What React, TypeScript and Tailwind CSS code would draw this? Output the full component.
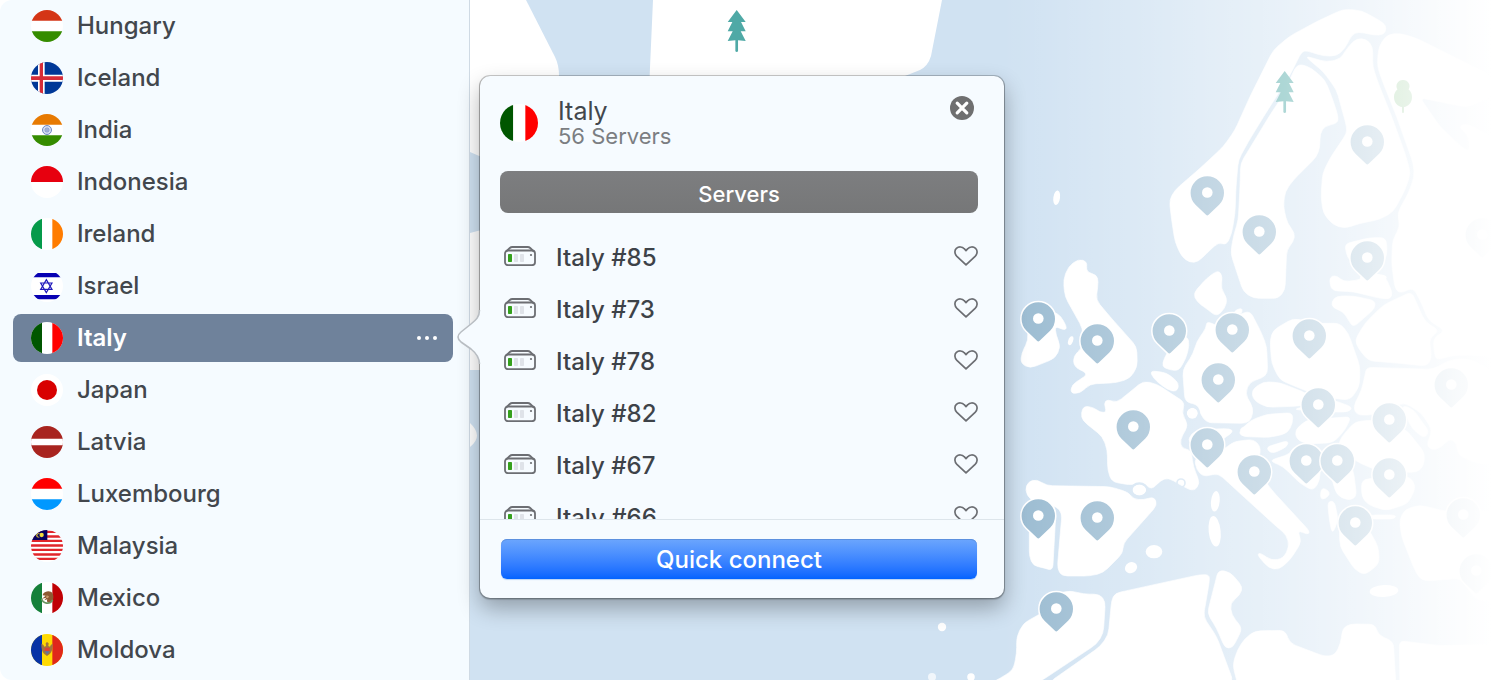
import { useState } from 'react';
import type { ReactNode } from 'react';

type Point = [number, number];

/* ---------- Flags ---------- */

const flags: Record<string, ReactNode> = {
  Hungary: (
    <>
      <path fill="#fff" d="M0 0h96v96H0z" />
      <path fill="#d43516" d="M0 0h96v32H0z" />
      <path fill="#358c00" d="M0 64h96v32H0z" />
    </>
  ),
  Iceland: (
    <>
      <path fill="#003897" d="M0 0h96v96H0z" />
      <path fill="#fff" d="M21 0h20v96H21zM0 38h96v21H0z" />
      <path fill="#d62c38" d="M26 0h10v96H26zM0 43h96v11H0z" />
    </>
  ),
  India: (
    <>
      <path fill="#fff" d="M0 0h96v96H0z" />
      <path fill="#e77a02" d="M0 0h96v32H0z" />
      <path fill="#358c00" d="M0 64h96v32H0z" />
      <circle cx="48" cy="48" r="13.500" fill="#d4dcf0" stroke="#6f87c4" strokeWidth="3" />
      <circle cx="48" cy="48" r="6" fill="none" stroke="#7e93cb" strokeWidth="3" />
      <circle cx="48" cy="48" r="2" fill="#4560ac" />
    </>
  ),
  Indonesia: (
    <>
      <path fill="#fff" d="M0 0h96v96H0z" />
      <path fill="#e7000f" d="M0 0h96v48H0z" />
    </>
  ),
  Ireland: (
    <>
      <path fill="#fff" d="M0 0h96v96H0z" />
      <path fill="#059a4a" d="M0 0h33v96H0z" />
      <path fill="#ff7c00" d="M64 0h32v96H64z" />
    </>
  ),
  Israel: (
    <>
      <path fill="#fff" d="M0 0h96v96H0z" />
      <path fill="#0700b2" d="M0 9h96v13H0zM0 75h96v13H0z" />
      <path
        fill="none"
        stroke="#2019bb"
        strokeWidth="3.500"
        d="M46 29 63 58H29zM46 68 29 39h34z"
      />
    </>
  ),
  Italy: (
    <>
      <path fill="#fff" d="M0 0h96v96H0z" />
      <path fill="#005600" d="M0 0h33v96H0z" />
      <path fill="#ff0000" d="M64 0h32v96H64z" />
    </>
  ),
  Japan: (
    <>
      <path fill="#fff" d="M0 0h96v96H0z" />
      <circle cx="48" cy="48" r="30" fill="#d80000" />
    </>
  ),
  Latvia: (
    <>
      <path fill="#a8241f" d="M0 0h96v96H0z" />
      <path fill="#fff" d="M0 38h96v20H0z" />
    </>
  ),
  Luxembourg: (
    <>
      <path fill="#fff" d="M0 0h96v96H0z" />
      <path fill="#ff0000" d="M0 0h96v32H0z" />
      <path fill="#0098ff" d="M0 64h96v32H0z" />
    </>
  ),
  Malaysia: (
    <>
      <path fill="#fff" d="M0 0h96v96H0z" />
      <path
        fill="#e1252b"
        d="M0 2h96v7H0zM0 16h96v7H0zM0 29h96v7H0zM0 43h96v7H0zM0 56h96v7H0zM0 70h96v7H0zM0 83h96v7H0z"
      />
      <path fill="#06005f" d="M0 0h49v30H0z" />
      <circle cx="22" cy="16" r="7" fill="#b9a437" />
      <circle cx="25" cy="16" r="5" fill="#06005f" />
      <circle cx="32" cy="15" r="6.500" fill="#f2dc3c" />
    </>
  ),
  Mexico: (
    <>
      <path fill="#fff" d="M0 0h96v96H0z" />
      <path fill="#15803a" d="M0 0h33v96H0z" />
      <path fill="#c00005" d="M64 0h32v96H64z" />
      <path
        fill="#8f5a33"
        d="M36 36c7-10 24-11 29-1 4 8 3 21-7 26-9 4-12-3-9-9l-9 3 6-8-13 3 11-9-9-1z"
      />
      <path fill="#c99a6c" d="m47 40 7 3-3 6-6-2z" />
      <path fill="none" stroke="#69945f" strokeWidth="5" d="M32 50c3 15 24 19 33 4" />
    </>
  ),
  Moldova: (
    <>
      <path fill="#ffda02" d="M0 0h96v96H0z" />
      <path fill="#0733a6" d="M0 0h33v96H0z" />
      <path fill="#e0271b" d="M64 0h32v96H64z" />
      <path
        fill="#a3763f"
        d="M31 29c5 1 8 5 9 9l5-2-1-8 4-4 5 4-1 8 5 2c1-5 5-8 9-9-1 14-3 24-9 30l-9 7-9-7c-6-6-8-16-8-30z"
      />
      <path fill="#dd4433" d="M41 41h15v11H41z" />
      <path fill="#5b75a8" d="M41 52h15l-7 9z" />
    </>
  ),
};

function Flag({ country, large = false }: { country: string; large?: boolean }) {
  return (
    <span
      className={
        large
          ? 'block size-[38px] shrink-0 overflow-hidden rounded-full'
          : 'block size-8 shrink-0 overflow-hidden rounded-full'
      }
    >
      <svg viewBox="0 0 96 96" className="block size-full" aria-hidden="true">
        {flags[country]}
      </svg>
    </span>
  );
}

/* ---------- Map ---------- */

/* Land outlines, in thirds of a map unit counted from (1000, 0). */
const lands: Point[][] = [
  // Norway
  [[1040, 28], [1085, 32], [1150, 68], [1160, 85], [1150, 105], [1120, 105], [1075, 95], [1055, 105], [1035, 145], [1010, 168], [970, 168], [920, 152], [905, 155], [890, 185], [870, 225], [845, 265], [800, 335], [745, 425], [715, 480], [708, 560], [705, 640], [695, 700], [680, 735], [655, 727], [620, 760], [595, 785], [570, 788], [545, 770], [525, 725], [515, 660], [508, 600], [525, 570], [600, 505], [670, 440], [705, 390], [750, 290], [820, 150], [870, 108], [950, 65], [1020, 32]],
  // Sweden
  [[905, 193], [935, 205], [975, 240], [995, 290], [1015, 350], [1012, 370], [975, 378], [960, 400], [960, 440], [950, 470], [880, 540], [855, 575], [850, 620], [862, 670], [885, 700], [880, 725], [860, 750], [855, 870], [835, 895], [760, 895], [730, 875], [715, 830], [692, 760], [700, 710], [715, 660], [720, 560], [722, 490], [740, 460], [810, 345], [850, 285], [880, 215], [890, 198]],
  // Finland
  [[915, 168], [980, 186], [1020, 178], [1045, 140], [1070, 115], [1100, 118], [1118, 140], [1118, 200], [1135, 250], [1175, 350], [1215, 460], [1232, 520], [1215, 570], [1180, 635], [1140, 658], [1080, 670], [1035, 685], [1000, 675], [970, 640], [963, 590], [968, 520], [990, 475], [1040, 400], [1040, 380], [1010, 270], [970, 215], [940, 190]],
  // Russia
  [[1145, 125], [1165, 103], [1200, 100], [1250, 115], [1470, 225], [1476, 290], [1400, 322], [1260, 293], [1320, 380], [1395, 450], [1410, 450], [1405, 405], [1375, 380], [1400, 370], [1600, 480], [1600, 1080], [1410, 1065], [1360, 1066], [1310, 1080], [1303, 1060], [1300, 1015], [1335, 992], [1285, 960], [1265, 910], [1240, 863], [1200, 880], [1185, 865], [1175, 790], [1178, 720], [1200, 680], [1192, 640], [1225, 580], [1243, 530], [1240, 490], [1190, 350], [1150, 250], [1132, 200], [1135, 150]],
  // Ukraine
  [[1100, 1102], [1200, 1105], [1300, 1108], [1345, 1082], [1390, 1075], [1430, 1085], [1476, 1115], [1600, 1150], [1600, 1400], [1430, 1390], [1375, 1365], [1370, 1330], [1350, 1315], [1320, 1345], [1295, 1350], [1280, 1335], [1297, 1290], [1265, 1240], [1215, 1208], [1160, 1225], [1120, 1245], [1070, 1245], [1060, 1220], [1085, 1170], [1095, 1125]],
  // Moldova
  [[1205, 1215], [1240, 1228], [1262, 1260], [1288, 1295], [1272, 1315], [1235, 1285]],
  // Belarus
  [[1065, 1020], [1095, 970], [1150, 915], [1235, 875], [1250, 910], [1275, 965], [1318, 992], [1288, 1015], [1295, 1075], [1280, 1098], [1200, 1090], [1105, 1082], [1075, 1045]],
  // Estonia
  [[1033, 732], [1110, 713], [1158, 713], [1162, 760], [1145, 805], [1080, 795], [1045, 780]],
  // Latvia
  [[988, 840], [995, 828], [1012, 828], [1030, 845], [1080, 840], [1095, 822], [1155, 828], [1178, 880], [1170, 897], [1140, 895], [1060, 875], [995, 872]],
  // Lithuania
  [[995, 905], [1010, 888], [1060, 888], [1125, 902], [1125, 925], [1060, 982], [1045, 960], [1030, 935], [998, 923]],
  // Poland
  [[810, 1020], [820, 990], [880, 955], [950, 970], [1020, 970], [1045, 1000], [1080, 1100], [1078, 1160], [1050, 1200], [970, 1192], [900, 1165], [840, 1140], [815, 1090]],
  // Germany
  [[618, 985], [620, 965], [640, 972], [660, 980], [700, 950], [750, 932], [785, 1000], [800, 1040], [803, 1120], [785, 1135], [750, 1145], [735, 1180], [760, 1225], [755, 1255], [740, 1270], [620, 1268], [600, 1240], [595, 1215], [555, 1205], [548, 1110], [580, 1060], [590, 1025]],
  // Denmark
  [[580, 880], [620, 835], [655, 810], [668, 830], [662, 865], [682, 895], [675, 925], [650, 950], [625, 930], [590, 905]],
  [[698, 935], [728, 922], [724, 945]],
  // Czechia
  [[755, 1170], [790, 1145], [840, 1148], [920, 1180], [950, 1205], [900, 1218], [800, 1222], [760, 1200]],
  // Slovakia
  [[880, 1228], [1000, 1200], [1058, 1222], [1045, 1236], [970, 1236]],
  // Austria
  [[715, 1298], [750, 1262], [800, 1243], [878, 1238], [878, 1270], [862, 1300], [810, 1312], [730, 1310]],
  // Hungary
  [[885, 1290], [920, 1260], [1054, 1250], [1035, 1290], [1000, 1328], [920, 1332], [890, 1318]],
  // Romania
  [[1025, 1310], [1065, 1265], [1120, 1260], [1220, 1290], [1275, 1360], [1270, 1400], [1250, 1417], [1140, 1415], [1070, 1385], [1015, 1335]],
  // Bulgaria
  [[1085, 1440], [1085, 1490], [1105, 1515], [1160, 1532], [1225, 1510], [1248, 1460], [1230, 1430], [1150, 1430]],
  // Balkans
  [[1000, 1345], [1035, 1370], [1060, 1410], [1070, 1490], [1045, 1502], [1010, 1485], [985, 1400]],
  [[797, 1342], [865, 1321], [862, 1340], [815, 1362]],
  [[808, 1382], [870, 1362], [880, 1340], [960, 1350], [960, 1440], [940, 1473], [900, 1450], [850, 1400]],
  [[960, 1495], [965, 1460], [993, 1478], [975, 1498]],
  [[983, 1505], [1003, 1503], [1015, 1560], [997, 1602], [988, 1560]],
  // Greece
  [[1018, 1580], [1090, 1560], [1135, 1640], [1138, 1690], [1095, 1725], [1065, 1710], [1020, 1640]],
  [[1110, 1545], [1188, 1545], [1184, 1557], [1110, 1557]],
  // Turkey
  [[1198, 1560], [1215, 1528], [1260, 1515], [1340, 1535], [1600, 1530], [1600, 1810], [1430, 1800], [1380, 1735], [1280, 1743], [1258, 1735], [1240, 1700], [1205, 1610]],
  // Great Britain
  [[190, 840], [205, 800], [235, 777], [262, 785], [258, 815], [290, 825], [295, 845], [288, 900], [330, 950], [410, 1040], [412, 1100], [390, 1135], [350, 1148], [270, 1152], [240, 1180], [212, 1180], [215, 1155], [265, 1122], [222, 1100], [220, 1068], [250, 1040], [248, 985], [195, 890]],
  // Ireland
  [[62, 1090], [65, 1060], [85, 1020], [80, 960], [110, 930], [160, 935], [182, 947], [202, 985], [190, 990], [165, 978], [168, 1005], [182, 1040], [165, 1075], [90, 1105]],
  // Netherlands
  [[487, 1090], [500, 1060], [535, 1010], [563, 1010], [568, 1035], [558, 1075], [535, 1114], [492, 1105]],
  // Belgium
  [[450, 1112], [500, 1118], [538, 1150], [530, 1176], [500, 1168], [460, 1135]],
  // France
  [[243, 1240], [252, 1218], [280, 1222], [300, 1237], [320, 1237], [312, 1210], [322, 1198], [350, 1208], [385, 1180], [430, 1143], [470, 1152], [555, 1208], [545, 1240], [565, 1275], [540, 1320], [545, 1345], [573, 1350], [580, 1400], [600, 1450], [582, 1474], [550, 1460], [505, 1433], [480, 1442], [455, 1470], [430, 1448], [390, 1455], [335, 1445], [323, 1410], [322, 1350], [308, 1310], [248, 1262]],
  // Switzerland
  [[563, 1325], [575, 1300], [600, 1288], [690, 1286], [700, 1295], [665, 1320], [640, 1345], [600, 1340]],
  // Liechtenstein corridor
  [[718, 1286], [745, 1276], [755, 1285], [728, 1300]],
  // Italy
  [[583, 1375], [620, 1360], [670, 1350], [700, 1325], [760, 1318], [782, 1340], [778, 1375], [765, 1400], [815, 1470], [930, 1595], [922, 1604], [892, 1590], [905, 1625], [870, 1680], [835, 1710], [805, 1703], [772, 1665], [780, 1658], [815, 1682], [850, 1675], [868, 1640], [860, 1605], [830, 1580], [720, 1480], [655, 1420], [610, 1430], [590, 1410]],
  // Spain
  [[75, 1470], [85, 1445], [110, 1438], [140, 1457], [330, 1460], [385, 1477], [400, 1497], [430, 1500], [462, 1490], [472, 1515], [370, 1630], [368, 1660], [310, 1718], [270, 1728], [185, 1728], [172, 1705], [186, 1540], [170, 1520], [90, 1500]],
  // Portugal
  [[88, 1580], [85, 1510], [155, 1510], [168, 1530], [158, 1712], [130, 1703], [100, 1697], [88, 1670]],
  // Morocco
  [[50, 1910], [70, 1870], [150, 1825], [130, 1790], [210, 1772], [250, 1782], [300, 1783], [316, 1805], [310, 1900], [290, 1932], [120, 2045], [-20, 2045], [0, 2035], [40, 2010], [50, 1960]],
  // Algeria
  [[335, 1800], [345, 1780], [380, 1772], [600, 1724], [628, 1724], [628, 1745], [610, 1850], [650, 1910], [700, 2045], [150, 2045], [300, 1940], [325, 1905]],
  // Tunisia
  [[645, 1750], [655, 1710], [690, 1716], [728, 1760], [720, 1785], [690, 1810], [695, 1845], [727, 1885], [698, 1944], [675, 1944], [650, 1885], [622, 1840]],
  // Libya
  [[698, 1995], [712, 1950], [735, 1915], [765, 1893], [855, 1891], [870, 1930], [975, 1970], [1005, 1965], [1022, 1930], [1028, 1885], [1050, 1872], [1125, 1873], [1135, 1905], [1180, 1925], [1188, 2060], [715, 2060]],
  // Egypt
  [[1198, 1922], [1320, 1937], [1600, 1930], [1600, 2060], [1200, 2060]],
];

const islands: [number, number, number, number, number][] = [
  [170, 593, 10, 22, 8],
  [212, 1022, 7, 14, 20],
  [577, 1240, 17, 17, 0],
  [418, 1470, 21, 17, 0],
  [646, 1504, 13, 31, 6],
  [644, 1594, 18, 46, -6],
  [462, 1655, 25, 20, 0],
  [393, 1703, 19, 16, -30],
  [1152, 1773, 43, 18, -3],
  [1120, 833, 40, 12, 0],
];

const pins: Point[] = [
  [1367, 142], [1207, 193], [1259, 232], [1482, 235], [1367, 258], [1038, 319],
  [1097, 341], [1169, 331], [1232, 330], [1309, 336], [1218, 380], [1451, 385],
  [1318, 405], [1389, 420], [1133, 427], [1207, 445], [1306, 461], [1337, 461],
  [1254, 472], [1389, 475], [1463, 515], [1355, 523], [1476, 571], [1038, 516],
  [1097, 518], [1056, 609],
];

function roundedPath(points: Point[], radius: number) {
  const count = points.length;
  return (
    points
      .map((p, i) => {
        const prev = points[(i + count - 1) % count];
        const next = points[(i + 1) % count];
        const toward = (q: Point): Point => {
          const length = Math.hypot(q[0] - p[0], q[1] - p[1]);
          const t = Math.min(radius, length / 2) / length;
          return [p[0] + (q[0] - p[0]) * t, p[1] + (q[1] - p[1]) * t];
        };
        const a = toward(prev);
        const b = toward(next);
        return `${i ? 'L' : 'M'}${a[0].toFixed(1)} ${a[1].toFixed(1)}Q${p[0]} ${p[1]} ${b[0].toFixed(1)} ${b[1].toFixed(1)}`;
      })
      .join('') + 'Z'
  );
}

const pinePath =
  'M0 0 27 36 13 36 27 64 12 64 27 93 4 91V124q-4 4-8 0V91L-27 93-12 64-27 64-13 36-27 36Z';

function WorldMap() {
  return (
    <svg
      viewBox="470 0 1022 680"
      preserveAspectRatio="xMinYMin slice"
      className="absolute inset-0 size-full"
      aria-hidden="true"
    >
      <defs>
        <linearGradient id="fade" gradientUnits="userSpaceOnUse" x1="1000" y1="0" x2="1492" y2="0">
          <stop offset="0" stopColor="#fff" stopOpacity="0" />
          <stop offset="0.080" stopColor="#fff" stopOpacity="0.060" />
          <stop offset="0.420" stopColor="#fff" stopOpacity="0.400" />
          <stop offset="0.580" stopColor="#fff" stopOpacity="0.540" />
          <stop offset="0.750" stopColor="#fff" stopOpacity="0.720" />
          <stop offset="0.920" stopColor="#fff" stopOpacity="0.920" />
          <stop offset="1" stopColor="#fff" />
        </linearGradient>
      </defs>
      <path fill="#d0e2f2" d="M470 0H1492V680H470z" />
      <g fill="#fff">
        <path d="M470 0H526L555 57Q559 65 559 76V120L500 165 470 152z" />
        <path d="M470 233 500 225V370H470zM470 423Q484 436 470 447z" />
        <path d="M653 0H942L931 56Q928 66 920 70L905 76 890 90H649z" />
        <circle cx="942" cy="627" r="4.200" />
        <circle cx="932" cy="677" r="4" opacity="0.700" />
        <circle cx="971" cy="677" r="3.800" />
      </g>
      <g transform="translate(1000 0) scale(0.33333)" fill="#fff">
        {lands.map((points, i) => (
          <path
            key={i}
            d={roundedPath(points, 18)}
            stroke="#fff"
            strokeWidth="2"
            strokeLinejoin="round"
          />
        ))}
        {islands.map(([cx, cy, rx, ry, turn], i) => (
          <ellipse
            key={i}
            cx={cx}
            cy={cy}
            rx={rx}
            ry={ry}
            transform={`rotate(${turn} ${cx} ${cy})`}
          />
        ))}
        <g fill="none" stroke="#d0e2f2" strokeWidth="7">
          <circle cx="577" cy="1240" r="20" />
          <ellipse cx="418" cy="1470" rx="24" ry="20" />
          <circle cx="543" cy="1449" r="12" strokeWidth="5" />
        </g>
      </g>
      <path fill="#4fa9a6" transform="translate(736.700 10) scale(0.33333)" d={pinePath} />
      <path fill="#4fa9a6" transform="translate(1284.700 71) scale(0.33333)" d={pinePath} />
      <path
        fill="#84c286"
        d="M1403 80a6.300 6.300 0 0 1 5.600 9.500c2.400 2 3.400 4.500 3.400 7.500 0 6-4 9.500-8 10v5a1 1 0 0 1-2 0v-5c-4-.5-8-4-8-10 0-3 1-5.500 3.400-7.500A6.300 6.300 0 0 1 1403 80z"
      />
      {pins.map(([x, y]) => (
        <g key={`${x}-${y}`} transform={`translate(${x + 0.3} ${y})`}>
          <path
            d="M-11.800 11.800a16.700 16.700 0 1 1 23.600 0L1.300 21.800a1.800 1.800 0 0 1-2.600 0z"
            fill="#9abbd1"
            stroke="#fff"
            strokeWidth="3"
            paintOrder="stroke"
          />
          <circle cy="-0.500" r="5.300" fill="#fff" />
        </g>
      ))}
      <path fill="url(#fade)" d="M1000 0H1492V680H1000z" />
    </svg>
  );
}

/* ---------- Icons ---------- */

function ServerIcon() {
  return (
    <svg viewBox="0 0 32 20" className="h-5 w-8 shrink-0" fill="none" aria-hidden="true">
      <rect x="1" y="4.500" width="30" height="14.700" rx="3" stroke="#6c6e73" strokeWidth="1.800" />
      <path
        d="M2 5.700 5.800 2Q6.800 1 8.300 1H23.700Q25.200 1 26.200 2L30 5.700"
        stroke="#6c6e73"
        strokeWidth="1.800"
      />
      <rect x="4" y="8" width="4" height="8" rx="0.700" fill="#35a01d" />
      <rect x="10" y="8" width="4" height="8" rx="0.700" fill="#dfe3e9" />
      <rect x="16" y="8" width="4" height="8" rx="0.700" fill="#dfe3e9" />
      <circle cx="27" cy="9" r="1.100" fill="#6c6e73" />
    </svg>
  );
}

function HeartIcon({ filled }: { filled: boolean }) {
  return (
    <svg viewBox="0 0 24 20" className="h-5 w-6" aria-hidden="true">
      <path
        d="M12 18.900 2.900 10.300C.2 7.600.4 4.300 2.400 2.400 4.700.3 8.300.6 10.200 2.700L12 4.600 13.800 2.700C15.700.6 19.300.3 21.600 2.400 23.600 4.300 23.800 7.600 21.100 10.300Z"
        fill={filled ? '#6c6e73' : 'none'}
        stroke="#6c6e73"
        strokeWidth="1.700"
        strokeLinejoin="round"
      />
    </svg>
  );
}

/* ---------- Sidebar ---------- */

const countries = [
  'Hungary', 'Iceland', 'India', 'Indonesia', 'Ireland', 'Israel', 'Italy',
  'Japan', 'Latvia', 'Luxembourg', 'Malaysia', 'Mexico', 'Moldova',
];

function Sidebar() {
  return (
    <nav
      aria-label="Countries"
      className="w-[470px] shrink-0 rounded-l-xl border-r border-[#cfdae4] bg-[#f5fbff]"
    >
      <ul className="flex flex-col gap-1 py-0.5 pr-4 pl-[13px]">
        {countries.map((country) => {
          const selected = country === 'Italy';
          return (
            <li
              key={country}
              className={
                selected
                  ? 'flex h-12 items-center rounded-lg bg-[#6f829b] text-white'
                  : 'flex h-12 items-center rounded-lg text-[#42474d]'
              }
            >
              <button
                type="button"
                className="flex h-full flex-1 items-center gap-3.5 pl-[18px] text-left text-[24px] leading-8 font-medium"
              >
                <Flag country={country} />
                {selected ? <span className="font-semibold">{country}</span> : country}
              </button>
              {selected && (
                <button type="button" aria-label="More" className="mr-4 flex gap-1 p-0">
                  <span className="size-1 rounded-full bg-white" />
                  <span className="size-1 rounded-full bg-white" />
                  <span className="size-1 rounded-full bg-white" />
                </button>
              )}
            </li>
          );
        })}
      </ul>
    </nav>
  );
}

/* ---------- Popover ---------- */

const servers = ['Italy #85', 'Italy #73', 'Italy #78', 'Italy #82', 'Italy #67', 'Italy #66'];

function CountryPopover() {
  const [liked, setLiked] = useState<string[]>([]);
  const toggle = (name: string) =>
    setLiked((all) => (all.includes(name) ? all.filter((n) => n !== name) : [...all, name]));

  return (
    <section
      aria-label="Italy"
      className="absolute top-[76px] left-2.5 w-[524px] rounded-[10px] bg-[#f6fbff] shadow-[0_0_0_1px_rgba(0,0,0,0.2),0_1px_1px_1px_rgba(0,0,0,0.15),0_10px_22px_rgba(0,0,0,0.3)]"
    >
      <svg
        viewBox="0 0 26 54"
        className="absolute top-[234px] -left-6 h-[54px] w-[26px]"
        aria-hidden="true"
      >
        <path
          d="M26 0H23.500C23.500 7 20 10 15 14L5 22Q-1 27 5 32L15 39C20 43 23.500 47 23.500 54H26z"
          fill="#f6fbff"
        />
        <path
          d="M23.500 0C23.500 7 20 10 15 14L5 22Q-1 27 5 32L15 39C20 43 23.500 47 23.500 54"
          fill="none"
          stroke="#b8bdc2"
          strokeWidth="1.600"
        />
      </svg>

      <header className="flex h-[95px] items-start pt-5 pr-[30px] pl-5">
        <div className="pt-2">
          <Flag country="Italy" large />
        </div>
        <div className="flex-1 pl-5">
          <h2 className="text-[25px] leading-[30px] text-[#42474d]">Italy</h2>
          <p className="text-[22px] leading-5 text-[#7b7e82]">56 Servers</p>
        </div>
        <button type="button" aria-label="Close">
          <svg viewBox="0 0 24 24" className="size-6" aria-hidden="true">
            <circle cx="12" cy="12" r="12" fill="#6f6f70" />
            <path
              d="m7.200 7.200 9.600 9.600m0-9.600-9.600 9.600"
              stroke="#fff"
              strokeWidth="3.200"
              strokeLinecap="round"
            />
          </svg>
        </button>
      </header>

      <div className="pr-[26px] pl-5">
        <button
          type="button"
          className="block h-[42px] w-full rounded-lg bg-linear-to-b from-[#7d7e80] to-[#767778] pt-1 text-[22px] leading-[38px] font-medium text-white"
        >
          Servers
        </button>
      </div>

      <ul className="h-[306px] overflow-x-hidden overflow-y-auto pt-[17px] pr-[26px] pl-6 [scrollbar-width:none]">
        {servers.map((name) => (
          <li key={name} className="flex h-[52px] items-center">
            <ServerIcon />
            <span className="flex-1 pt-1 pl-5 text-[24px] leading-8 font-medium text-[#3d4248]">
              {name}
            </span>
            <button
              type="button"
              aria-label={`Add ${name} to favourites`}
              aria-pressed={liked.includes(name)}
              onClick={() => toggle(name)}
            >
              <HeartIcon filled={liked.includes(name)} />
            </button>
          </li>
        ))}
      </ul>

      <footer className="border-t border-[#dde5eb] py-[19px] pr-[27px] pl-[21px]">
        <button
          type="button"
          className="block h-10 w-full rounded-md bg-linear-to-b from-[#6ca6fd] to-[#0163ff] pt-0.5 text-[24px] leading-[38px] font-medium text-white shadow-[inset_0_1px_0_#5c90df,0_1px_1px_rgba(0,90,220,0.25)]"
        >
          Quick connect
        </button>
      </footer>
    </section>
  );
}

export default function App() {
  return (
    <div className="flex min-h-screen overflow-hidden bg-white font-[Inter,'Liberation_Sans',sans-serif]">
      <Sidebar />
      <main className="relative flex-1">
        <WorldMap />
        <CountryPopover />
      </main>
    </div>
  );
}
